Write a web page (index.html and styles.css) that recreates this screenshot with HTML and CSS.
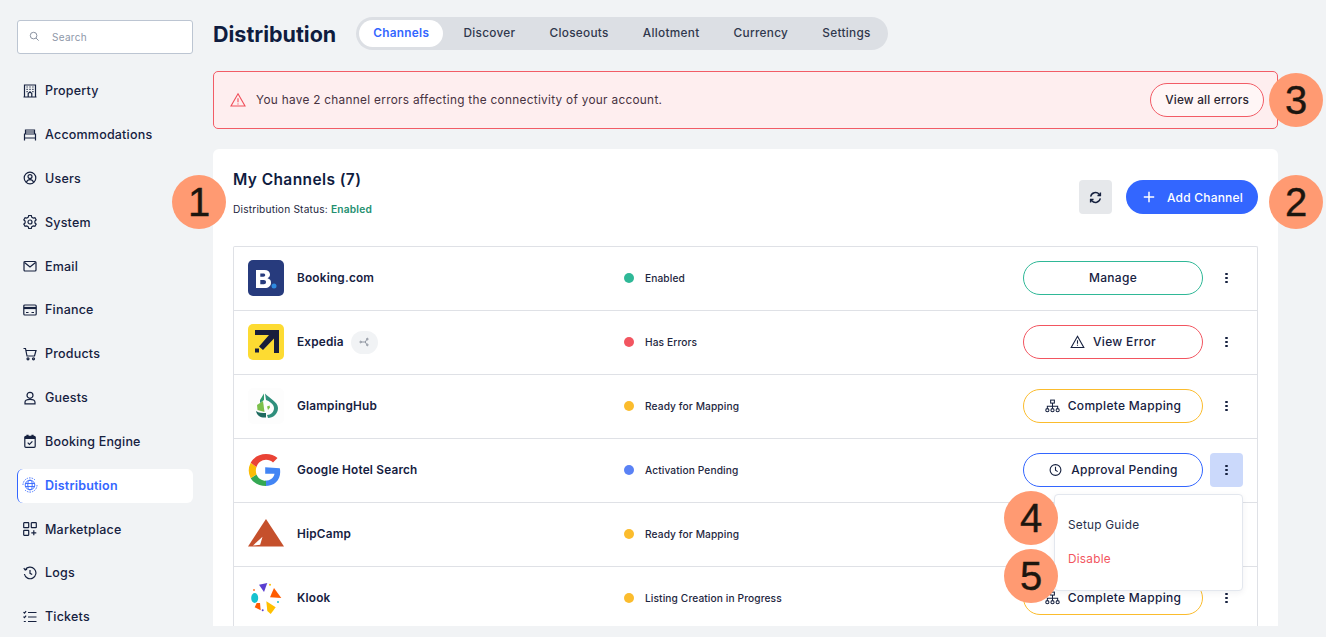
FILE: index.html
```html
<!DOCTYPE html>
<html lang="en">
<head>
<meta charset="utf-8">
<title>Distribution</title>
<link rel="stylesheet" href="styles.css">
</head>
<body>
<div class="app">
  <aside class="sidebar">
    <label class="search">
      <svg class="search-icon" viewBox="0 0 12 12"><circle cx="5" cy="5" r="3.6"/><path d="M7.7 7.7 10.5 10.5"/></svg>
      <span>Search</span>
    </label>
    <nav class="nav">
      <a class="nav-item"><svg class="ni" viewBox="0 0 14 14"><path d="M1.5 1h11v12h-11zM0.5 13h13"/><path d="M3.500 3h1.200M6.400 3h1.200M9.300 3h1.200M3.500 5.300h1.200M6.400 5.300h1.200M9.300 5.300h1.200M3.500 7.600h1.200M9.300 7.600h1.200M5.200 13V9.500L7 7.800l1.800 1.700V13"/></svg>Property</a>
      <a class="nav-item"><svg class="ni" viewBox="0 0 14 14"><path d="M2.500 6V2h9v4M1.500 6h11v4h-11zM1.500 10v2.500M12.500 10v2.500M2.500 4h9"/></svg>Accommodations</a>
      <a class="nav-item"><svg class="ni" viewBox="0 0 14 14"><circle cx="7" cy="7" r="5.800"/><circle cx="7" cy="5.600" r="2"/><path d="M3.400 11.200c.7-1.800 2-2.600 3.600-2.600s2.900.8 3.600 2.600"/></svg>Users</a>
      <a class="nav-item"><svg class="ni" viewBox="0 0 14 14"><path d="M5.700 1h2.600l.4 1.700 1.500.9 1.700-.5 1.300 2.300-1.300 1.200v1.800l1.300 1.200-1.300 2.300-1.700-.5-1.500.9-.4 1.700H5.700l-.4-1.700-1.500-.9-1.700.5L.8 9.600l1.300-1.200V6.600L.8 5.400l1.300-2.300 1.700.5 1.500-.9z" transform="translate(0 -.5)"/><circle cx="7" cy="7" r="2"/></svg>System</a>
      <a class="nav-item"><svg class="ni" viewBox="0 0 14 14"><rect x="1" y="2.500" width="12" height="9.500" rx="1"/><path d="m1.500 3.500 5.500 4.500 5.500-4.500"/></svg>Email</a>
      <a class="nav-item"><svg class="ni" viewBox="0 0 14 14"><rect x=".8" y="2" width="12.400" height="10" rx="1"/><path class="thick" d="M.8 5h12.400"/><path d="M3 9.500h2.500M8.500 9.500h2.500"/></svg>Finance</a>
      <a class="nav-item"><svg class="ni" viewBox="0 0 14 14"><path d="M.5 1.500h2l1.500 7.500h7.500l1.500-5.500H3"/><circle cx="5" cy="11.800" r="1"/><circle cx="10.500" cy="11.800" r="1"/></svg>Products</a>
      <a class="nav-item"><svg class="ni" viewBox="0 0 14 14"><circle cx="7" cy="4.300" r="3"/><path d="M2 12.800h10v-1.500c0-1.800-2-3-5-3s-5 1.200-5 3z"/></svg>Guests</a>
      <a class="nav-item"><svg class="ni" viewBox="0 0 14 14"><rect x="1.800" y="2.300" width="10.400" height="11" rx="1"/><path class="thick" d="M1.800 4h10.400M4.500 .8v2M9.500 .8v2"/><path d="m4.700 8.700 1.700 1.700 3-3"/></svg>Booking Engine</a>
      <a class="nav-item active"><svg class="ni globe" viewBox="0 0 16 16"><circle cx="8" cy="8" r="4.800"/><ellipse cx="8" cy="8" rx="2.200" ry="4.800"/><path d="M3.300 6.500h9.400M3.300 9.500h9.400"/><path class="dash" d="M1 8a7 7 0 0 1 12-5M15 8a7 7 0 0 1-12 5"/></svg>Distribution</a>
      <a class="nav-item"><svg class="ni" viewBox="0 0 14 14"><rect x=".7" y=".7" width="5" height="5" rx=".5"/><rect x="8.300" y=".7" width="5" height="5" rx=".5"/><rect x=".7" y="8.300" width="5" height="5" rx=".5"/><path d="M10.800 8.300v5M8.300 10.800h5"/></svg>Marketplace</a>
      <a class="nav-item"><svg class="ni" viewBox="0 0 14 14"><path d="M2.200 3.800a5.800 5.800 0 1 1-.8 4.200M.8 2.200l1.400 1.800 1.900-.8M7 4v3.300l2.200 1.300"/></svg>Logs</a>
      <a class="nav-item"><svg class="ni" viewBox="0 0 14 14"><path d="M5 2.500h8.500M5 7h8.500M5 11.500h8.500M.5 2.200l1 1 1.600-2M.5 6.700l1 1 1.600-2M.8 11.500h2"/></svg>Tickets</a>
    </nav>
  </aside>

  <main class="main">
    <header class="top">
      <h1 class="title">Distribution</h1>
      <div class="tabs">
        <a class="tab current">Channels</a>
        <a class="tab">Discover</a>
        <a class="tab">Closeouts</a>
        <a class="tab">Allotment</a>
        <a class="tab">Currency</a>
        <a class="tab">Settings</a>
      </div>
    </header>

    <section class="alert">
      <svg class="alert-icon" viewBox="0 0 16 16"><path d="M8 1.800 15 14H1z"/><path d="M8 6.200v4M8 11.500v1"/></svg>
      <p class="alert-text">You have 2 channel errors affecting the connectivity of your account.</p>
      <a class="alert-btn">View all errors</a>
    </section>

    <section class="card">
      <div class="card-head">
        <div>
          <h2 class="card-title">My Channels (7)</h2>
          <p class="status-line">Distribution Status: <b>Enabled</b></p>
        </div>
        <div class="card-actions">
          <a class="refresh"><svg viewBox="0 0 14 14"><path d="M1.800 6A5.300 5.300 0 0 1 11 3.500l1 1.200M12.200 8A5.300 5.300 0 0 1 3 10.500L2 9.300M12.300 1.700v3.200H9.100M1.700 12.300V9.100h3.200"/></svg></a>
          <a class="add"><svg viewBox="0 0 12 12"><path d="M6 .8v10.400M.8 6h10.400"/></svg>Add Channel</a>
        </div>
      </div>

      <div class="table">
        <div class="row">
          <div class="chan">
            <svg class="logo" viewBox="0 0 36 36"><rect width="36" height="36" rx="5" fill="#273b7d"/><path fill-rule="evenodd" d="M8 10h8.500c3.500 0 5.500 1.800 5.500 4.500 0 1.800-.9 3-2.500 3.800 2.300.6 3.500 2.200 3.500 4.400 0 3.200-2.400 5.300-6.200 5.300H8zm4.300 3.500v3.300h3c1.200 0 1.900-.6 1.900-1.700 0-1-.7-1.600-1.900-1.600zm0 6.500v4.300h3.500c1.400 0 2.200-.8 2.200-2.200 0-1.300-.8-2.100-2.200-2.100z" fill="#fff"/><circle cx="26" cy="26" r="2.500" fill="#2f8ae0"/></svg>
            <span class="chan-name">Booking.com</span>
          </div>
          <div class="state"><i class="dot green"></i>Enabled</div>
          <div class="ops"><a class="pill pill-green">Manage</a><a class="more"><i></i><i></i><i></i></a></div>
        </div>
        <div class="row">
          <div class="chan">
            <svg class="logo" viewBox="0 0 36 36"><rect width="36" height="36" rx="5" fill="#fddb32"/><path d="M7 6h24v23h-5V14.500L15 26l-4-3.500L21 11H7z" fill="#191e3b"/><rect x="7" y="24.500" width="4" height="4" fill="#191e3b"/></svg>
            <span class="chan-name">Expedia</span>
            <span class="share"><svg viewBox="0 0 12 12"><circle cx="2" cy="6" r="1"/><circle cx="10" cy="2.500" r="1"/><circle cx="10" cy="9.500" r="1"/><path d="M3 6h4.500L9.200 3.200M7.500 6l1.700 2.800"/></svg></span>
          </div>
          <div class="state"><i class="dot red"></i>Has Errors</div>
          <div class="ops"><a class="pill pill-red"><svg class="pi" viewBox="0 0 14 14"><path d="M7 1.300 13.300 12.500H.7z"/><path d="M7 5.300v3.500M7 9.800v1"/></svg>View Error</a><a class="more"><i></i><i></i><i></i></a></div>
        </div>
        <div class="row">
          <div class="chan">
            <svg class="logo" viewBox="0 0 36 36"><rect width="36" height="36" rx="5" fill="#fdfdfd"/><path d="M17 5.500C21 10 30 14 30 20c0 6-5 10-10 10l-1-3c4 0 7-3 7-7s-5-7-8-8z" fill="#2f8f7c"/><path d="M9 17l6-4 1.500 11L9.500 22z" fill="#7cc04b"/><path d="M12 12l4-6.500V12l-4 3z" fill="#2f9a70"/><path d="M8 23c3 2 6 2 10 2v4.500C13 30 9 28 8 23z" fill="#1f6b60"/><path d="M19 18.500l2.500-1 .5 2-2 2.500z" fill="#7cc04b"/></svg>
            <span class="chan-name">GlampingHub</span>
          </div>
          <div class="state"><i class="dot yellow"></i>Ready for Mapping</div>
          <div class="ops"><a class="pill pill-yellow"><svg class="pi" viewBox="0 0 16 14"><rect x="6" y=".7" width="4" height="3.200"/><path d="M8 3.900v3.300M2.500 9.500V7.200h11v2.300M8 7.200v2.300"/><circle cx="2.500" cy="11.500" r="1.700"/><circle cx="8" cy="11.500" r="1.700"/><circle cx="13.500" cy="11.500" r="1.700"/></svg>Complete Mapping</a><a class="more"><i></i><i></i><i></i></a></div>
        </div>
        <div class="row">
          <div class="chan">
            <svg class="logo" viewBox="0 0 36 36"><path d="M18 15.300v6.400h9.300c-.6 3.900-4.200 7-9.300 7v5.300c8.800 0 15-5.600 15-14.100 0-1.200-.1-2.400-.4-3.600z" fill="#4285f4" transform="translate(-.8 0)"/><path d="M18 28.700c-4.400 0-8.100-2.500-9.500-6.300l-5.800 3.800C5.600 31 11.300 34 18 34z" fill="#34a853"/><path d="M8.500 22.400a11 11 0 0 1 0-7.400L2.700 10.700a17 17 0 0 0 0 15.500z" fill="#fbbc05"/><path d="M18 7.800c2.900 0 5.200 1 7 2.700l4.500-4.400C26.500 3.500 22.600 2 18 2 11.300 2 5.600 5.400 2.700 10.700L8.500 15C9.900 10.700 13.600 7.800 18 7.800z" fill="#ea4335"/></svg>
            <span class="chan-name">Google Hotel Search</span>
          </div>
          <div class="state"><i class="dot blue"></i>Activation Pending</div>
          <div class="ops"><a class="pill pill-blue"><svg class="pi" viewBox="0 0 14 14"><circle cx="7" cy="7" r="5.400"/><path d="M7 3.700V7.300l2.200 1.300"/></svg>Approval Pending</a><a class="more on"><i></i><i></i><i></i></a></div>
        </div>
        <div class="row">
          <div class="chan">
            <svg class="logo" viewBox="0 0 36 36"><path d="M18 3 36 30.500H0z" fill="#c5502c"/><path d="M5 29.500l9.500-8.800-2.300 8z" fill="#fff"/></svg>
            <span class="chan-name">HipCamp</span>
          </div>
          <div class="state"><i class="dot yellow"></i>Ready for Mapping</div>
          <div class="ops"></div>
        </div>
        <div class="row">
          <div class="chan">
            <svg class="logo" viewBox="0 0 36 36"><path d="M11 4.700 19.300 3 16 12z" fill="#5a3fd0"/><path d="M26 8l7.300 10-11.300-.7z" fill="#ff5b00"/><ellipse cx="6.700" cy="18" rx="3.500" ry="5" fill="#16c2cf"/><path d="M18.300 21.300l9.400 6-5 6.700-3.400-3z" fill="#ffc000"/><path d="M8.700 23H12l.7 7.300-6-3z" fill="#ff5b00"/><circle cx="14.700" cy="30.300" r="1" fill="#5a3fd0"/><circle cx="30" cy="22" r="1" fill="#16c2cf"/><circle cx="22" cy="4.700" r="1" fill="#ffc000"/><circle cx="6" cy="10" r="1" fill="#ff7a33"/></svg>
            <span class="chan-name">Klook</span>
          </div>
          <div class="state"><i class="dot yellow"></i>Listing Creation in Progress</div>
          <div class="ops"><a class="pill pill-yellow"><svg class="pi" viewBox="0 0 16 14"><rect x="6" y=".7" width="4" height="3.200"/><path d="M8 3.900v3.300M2.500 9.500V7.200h11v2.300M8 7.200v2.300"/><circle cx="2.500" cy="11.500" r="1.700"/><circle cx="8" cy="11.500" r="1.700"/><circle cx="13.500" cy="11.500" r="1.700"/></svg>Complete Mapping</a><a class="more"><i></i><i></i><i></i></a></div>
        </div>
      </div>
    </section>
  </main>
</div>

<div class="menu">
  <a class="menu-item">Setup Guide</a>
  <a class="menu-item danger">Disable</a>
</div>
<span class="callout c1">1</span>
<span class="callout c2">2</span>
<span class="callout c3">3</span>
<span class="callout c4">4</span>
<span class="callout c5">5</span>
</body>
</html>
```

FILE: styles.css
```css
* { box-sizing: border-box; }
html, body { margin: 0; height: 100%; overflow: hidden; }
body {
  position: relative;
  width: 1326px;
  height: 637px;
  background: #f1f3f5;
  font-family: Inter, "Liberation Sans", sans-serif;
  color: #16213f;
}
h1, h2, p { margin: 0; }
a { display: flex; }

.app { display: flex; height: 637px; padding: 0 48px 11px 17px; gap: 20px; }

.sidebar { width: 176px; flex: none; padding-top: 20px; }
.search {
  display: flex; align-items: center; height: 34px; padding: 0 0 1px 11px; gap: 12px;
  background: #fff; border: 1px solid #bcc5d2; border-radius: 3px;
  font-size: 10px; color: #8e97a8; letter-spacing: .3px;
}
.search-icon { width: 11px; height: 11px; fill: none; stroke: #7f8898; stroke-width: 1; }

.nav { display: grid; grid-auto-rows: 34px; row-gap: 9.830px; margin-top: 20.300px; }
.nav-item {
  display: flex; align-items: center; gap: 8px; padding-left: 6px; padding-bottom: 1px;
  font-size: 12.500px; font-weight: 500; letter-spacing: .2px; color: #16213f; border-radius: 6px;
}
.ni { width: 14px; height: 14px; flex: none; fill: none; stroke: #16213f; stroke-width: 1.200; }
.ni .thick { stroke-width: 2.200; }
.nav-item.active {
  background: #fff; color: #3366ff; font-weight: 600;
  border-left: 1px solid #3366ff; padding-left: 5px;
}
.globe { width: 16px; height: 16px; margin-left: -1px; margin-right: -1px; stroke: #3366ff; stroke-width: .9; }
.globe .dash { stroke-dasharray: 1.500 1; }

.main { width: 1065px; flex: none; display: flex; flex-direction: column; }
.top { display: flex; align-items: center; gap: 20px; padding-top: 17px; height: 50px; }
.title { font-size: 21.500px; font-weight: 700; color: #0f1c3f; }
.tabs { display: flex; height: 33px; align-items: center; padding: 0 3px; background: #dcdfe4; border-radius: 17px; }
.tab { height: 27px; align-items: center; padding: 0 14px 1px; margin-right: 6.100px; font-size: 11.800px; font-weight: 500; letter-spacing: .3px; color: #30384d; border-radius: 14px; }
.tab:last-child { margin-right: 0; }
.tab.current { background: #fff; color: #3366ff; font-weight: 600; }

.alert {
  display: flex; align-items: center; height: 58px; margin-top: 21px; padding: 0 13px 0 16px;
  background: #feeeef; border: 1px solid #f25c66; border-radius: 5px;
}
.alert-icon { width: 16px; height: 16px; fill: none; stroke: #f04f5a; stroke-width: 1.100; }
.alert-text { flex: 1; margin-left: 10px; padding-bottom: 1px; font-size: 11.800px; letter-spacing: .3px; color: #47323f; }
.alert-btn {
  height: 34px; align-items: center; padding: 0 14px 1px; font-size: 11.800px; font-weight: 500; letter-spacing: .2px; color: #2a2430;
  border: 1px solid #f25c66; border-radius: 17px; background: #fff6f6;
}

.card { flex: 1; margin-top: 20px; padding: 20px 20px 0; background: #fff; border-radius: 6px 6px 0 0; overflow: hidden; }
.card-head { display: flex; justify-content: space-between; height: 77px; }
.card-title { font-size: 15.500px; font-weight: 600; letter-spacing: .4px; color: #0f1c3f; line-height: 22px; }
.status-line { margin-top: 11px; font-size: 10.200px; letter-spacing: .18px; color: #1d2640; line-height: 14px; }
.status-line b { color: #23906f; font-weight: 600; }
.card-actions { display: flex; align-items: flex-start; gap: 14px; padding-top: 11px; }
.refresh { width: 33px; height: 34px; align-items: center; justify-content: center; background: #e6e8eb; border-radius: 4px; }
.refresh svg { width: 13px; height: 13px; fill: none; stroke: #16213f; stroke-width: 1.500; }
.add {
  width: 132px; height: 34px; align-items: center; padding-left: 17px; gap: 12px;
  background: #3366ff; color: #fff; border-radius: 17px; font-size: 12px; font-weight: 500; letter-spacing: .2px;
}
.add svg { width: 12px; height: 12px; fill: none; stroke: #fff; stroke-width: 1.500; }

.table { border: 1px solid #dfe1e6; border-bottom: 0; border-radius: 2px 2px 0 0; }
.row { display: flex; align-items: center; height: 64px; padding: 0 14px 1px; border-bottom: 1px solid #dfe1e6; }
.chan { display: flex; align-items: center; width: 376px; flex: none; }
.logo { width: 36px; height: 36px; flex: none; }
.chan-name { margin-left: 13px; font-size: 11.800px; font-weight: 600; letter-spacing: .2px; color: #16213f; }
.share { display: flex; align-items: center; justify-content: center; width: 27px; height: 23px; margin-left: 7px; background: #f1f3f5; border-radius: 12px; }
.share svg { width: 10px; height: 10px; fill: none; stroke: #6f7785; stroke-width: .9; }
.state { display: flex; align-items: center; gap: 11px; flex: 1; font-size: 10.200px; font-weight: 500; letter-spacing: .1px; color: #1d2640; }
.dot { width: 10px; height: 10px; border-radius: 50%; }
.green { background: #2fb897; }
.red { background: #f25560; }
.yellow { background: #fbbc2d; }
.blue { background: #5a82f5; }

.ops { display: flex; align-items: center; width: 220px; height: 34px; flex: none; }
.pill {
  width: 180px; height: 34px; align-items: center; justify-content: center; gap: 8px; padding-bottom: 1px;
  border: 1px solid; border-radius: 17px; font-size: 12px; font-weight: 500; letter-spacing: .3px; color: #16213f;
}
.pill-green { border-color: #2fb897; }
.pill-red { border-color: #f25560; }
.pill-yellow { border-color: #fbbc2d; }
.pill-blue { border-color: #3366ff; }
.pi { width: 15px; height: 14px; flex: none; fill: none; stroke: #16213f; stroke-width: 1.100; }
.more { width: 33px; height: 34px; margin-left: 7px; flex-direction: column; align-items: center; justify-content: center; gap: 1.800px; border-radius: 4px; }
.more i { width: 2.300px; height: 2.300px; background: #16213f; border-radius: 50%; }
.more.on { background: #cbd9fb; }

.menu {
  position: absolute; left: 1054px; top: 494px; width: 189px; height: 97px; padding: 23px 13px;
  display: flex; flex-direction: column; gap: 20px;
  background: #fff; border: 1px solid #e3e7ee; border-radius: 4px; box-shadow: 0 2px 6px rgba(22, 33, 63, .06);
}
.menu-item { height: 14px; align-items: center; font-size: 11.800px; letter-spacing: .25px; color: #27304a; }
.menu-item.danger { color: #f25560; }

.callout {
  position: absolute; width: 54px; height: 54px; display: flex; align-items: center; justify-content: center;
  background: #ff9a72; border-radius: 50%;
  font-family: "Liberation Sans", Arial, sans-serif; font-size: 40px; color: #1c160f; -webkit-text-stroke: .4px #1c160f;
}
.c1 { left: 172px; top: 175px; }
.c2 { left: 1269px; top: 175px; }
.c3 { left: 1269px; top: 73px; }
.c4 { left: 1004px; top: 491px; }
.c5 { left: 1004px; top: 549px; }
```
